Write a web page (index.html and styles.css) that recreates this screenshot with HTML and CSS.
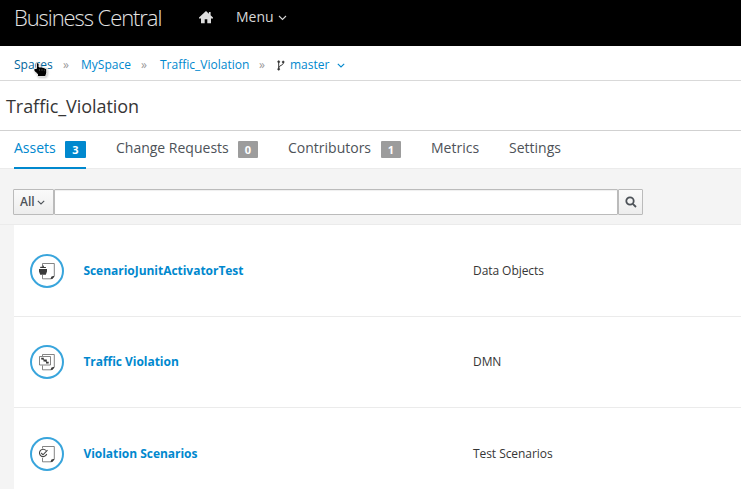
FILE: index.html
```html
<!DOCTYPE html>
<html lang="en">
<head>
<meta charset="utf-8">
<title>Business Central</title>
<link rel="stylesheet" href="styles.css">
</head>
<body>
<header class="masthead">
  <span class="brand">Business Central</span>
  <svg class="home" width="14" height="13" viewBox="0 0 14 13"><path d="M7 0 0 6.6V7.4H2V12.3H5.7V8.2H8.3V12.3H12V7.4H14V6.6L11.6 4.3V1H9.9V2.7Z"/></svg>
  <span class="menu">Menu</span>
  <svg class="chevron menu-chevron" width="9" height="6" viewBox="0 0 9 6"><path d="M1 1 4.5 4.5 8 1"/></svg>
</header>
<nav class="crumbs">
  <a class="crumb crumb-spaces">Spaces<svg class="pointer" width="15" height="16" viewBox="0 0 15 16"><path d="M3.5 1.5Q4.7 0 6 1.5V5H8.5L11 5.7 13.7 7V11L12.5 14.5H4.5V12L1 9V6.5H3.5Z"/><path class="knuckles" d="M6.5 7V9M9 7V9M11.4 7.6V9.2"/></svg></a>
  <span class="sep sep-1">»</span>
  <a class="crumb crumb-myspace">MySpace</a>
  <span class="sep sep-2">»</span>
  <a class="crumb crumb-project">Traffic_Violation</a>
  <span class="sep sep-3">»</span>
  <svg class="branch" width="8" height="11" viewBox="0 0 8 11"><path d="M1.7 2V9M6.2 2V3.5C6.2 5.3 2 5.3 1.8 7.8"/><circle cx="1.7" cy="1.7" r="1"/><circle cx="6.2" cy="2" r="1"/><circle cx="1.7" cy="9.2" r="1"/></svg>
  <a class="crumb crumb-branch">master</a>
  <svg class="chevron crumb-chevron" width="8" height="5" viewBox="0 0 8 5"><path d="M.8.8 4 4 7.2.8"/></svg>
</nav>
<div class="heading"><h1>Traffic_Violation</h1></div>
<nav class="tabs">
  <div class="tab tab-assets active"><span>Assets</span><b class="badge">3</b></div>
  <div class="tab tab-requests"><span>Change Requests</span><b class="badge">0</b></div>
  <div class="tab tab-contributors"><span>Contributors</span><b class="badge">1</b></div>
  <div class="tab tab-metrics"><span>Metrics</span></div>
  <div class="tab"><span>Settings</span></div>
</nav>
<div class="toolbar">
  <button class="filter">All<svg class="chevron" width="8" height="5" viewBox="0 0 8 5"><path d="M.8.8 4 4 7.2.8"/></svg></button>
  <input class="query" type="text" aria-label="Search assets">
  <button class="search" aria-label="Search"><svg width="12" height="12" viewBox="0 0 12 12"><circle cx="5" cy="5" r="3.7"/><path d="M7.8 7.8 11 11"/></svg></button>
</div>
<main class="assets">
  <div class="asset">
    <svg class="icon" width="34" height="34" viewBox="0 0 34 34"><circle class="ring" cx="17" cy="17" r="16"/><path class="page" d="M12.5 12V9.5H24.3V21.8L21.5 24.8H12.5V21"/><path class="solid" d="M9 15H17V17.5L15.8 20.8H10.2L9 17.5ZM10 14 10.5 12.8H12.2L12.6 11.5H13.6L14 13H15.8L16 14ZM20.5 24.8 21.5 22.5 24.3 21.7V22.8L22.3 25Z"/></svg>
    <a class="name">ScenarioJunitActivatorTest</a><span class="type">Data Objects</span>
  </div>
  <div class="asset">
    <svg class="icon" width="34" height="34" viewBox="0 0 34 34"><circle class="ring" cx="17" cy="17" r="16"/><path class="page" d="M12.5 11V9.5H24.3V21.8L21.5 24.8H12.5V20.5M9.5 11.5H20.5V20H9.5ZM12 13.5 18 18"/><path class="solid" d="M11.2 12.8H13.8V14.6H11.2ZM13.5 14.5H16.8V16.5H13.5ZM16 16.7H18.7V18.6H16ZM20.5 24.8 21.5 22.5 24.3 21.7V22.8L22.3 25Z"/></svg>
    <a class="name">Traffic Violation</a><span class="type">DMN</span>
  </div>
  <div class="asset">
    <svg class="icon" width="34" height="34" viewBox="0 0 34 34"><circle class="ring" cx="17" cy="17" r="16"/><path class="page" d="M12.5 11.5V9.5H24.3V21.8L21.5 24.8H12.5V21"/><path class="check" d="M16 13.5A3.7 3.7 0 1 0 16.7 17M11.2 16 13 17.8 17.5 13.2"/><path class="solid" d="M20.5 24.8 21.5 22.5 24.3 21.7V22.8L22.3 25Z"/></svg>
    <a class="name">Violation Scenarios</a><span class="type">Test Scenarios</span>
  </div>
</main>
</body>
</html>
```
FILE: styles.css
```css
* { box-sizing: border-box; }
body { margin: 0; height: 489px; overflow: hidden; background: #f4f4f4; font: 12px/20px "Open Sans", sans-serif; color: #363636; }
svg { flex: none; display: block; }
span, a { white-space: nowrap; }
.chevron { fill: none; stroke: currentColor; stroke-width: 1.1; }
.masthead { display: flex; align-items: flex-start; height: 46px; background: #000; color: #d6d6d6; padding-left: 15px; }
.brand { width: 185px; margin-left: -1px; font-size: 22px; font-weight: 300; line-height: 30px; padding-top: 2px; letter-spacing: -1.08px; color: #e4e4e4; }
.home { margin-top: 11px; fill: #ddd; }
.menu { width: 42px; margin-left: 23px; padding-top: 7px; font-size: 14px; }
.menu-chevron { margin-top: 15px; }
.crumbs { display: flex; align-items: center; height: 35px; padding: 4px 0 0 14px; background: #fff; border-bottom: 1px solid #d9d9d9; color: #0088ce; }
.crumb-spaces { position: relative; width: 49px; color: #00659c; }
.pointer { position: absolute; left: 19px; top: 7px; fill: #000; stroke: #fff; stroke-width: .8; filter: drop-shadow(1px 1px 1px #9999); }
.pointer .knuckles { stroke: #555; stroke-width: .6; }
.sep { width: 18px; color: #999; }
.crumb-myspace { width: 60px; }
.sep-2 { width: 19px; }
.crumb-project { width: 99px; }
.branch { margin-right: 5px; fill: #363636; stroke: #363636; stroke-width: .6; }
.branch path { fill: none; stroke-width: 1; }
.crumb-branch { width: 47px; }
.heading { height: 50px; padding: 13px 0 0 6px; background: #fff; border-bottom: 1px solid #d1d1d1; }
h1 { margin: 0; font-size: 18px; line-height: 25px; font-weight: 400; letter-spacing: -.05px; }
.tabs { display: flex; height: 38px; padding-left: 14px; background: #fff; border-bottom: 1px solid #ebebeb; color: #4d5258; font-size: 14px; }
.tab { display: flex; justify-content: space-between; height: 38px; padding-top: 7px; }
.tab-assets { width: 72px; margin-right: 30px; }
.tab-requests { width: 142px; margin-right: 30px; }
.tab-contributors { width: 113px; margin-right: 30px; }
.tab-metrics { width: 48px; margin-right: 30px; }
.active { color: #0088ce; border-bottom: 2px solid #0088ce; }
.badge { width: 20px; height: 17px; margin-top: 3px; background: #9c9c9c; color: #fff; font-size: 11px; line-height: 18px; text-align: center; border-radius: 1px; }
.active .badge { width: 21px; background: #0088ce; }
.toolbar { display: flex; height: 56px; padding: 20px 0 0 13px; border-bottom: 1px solid #ebebeb; }
button { height: 26px; border: 1px solid #bbb; border-radius: 1px; background: linear-gradient(#fafafa, #ededed); color: #4d5258; font: 600 12px/20px "Open Sans", sans-serif; padding: 0 6px; }
.filter { display: flex; align-items: center; gap: 2px; width: 41px; }
.query { width: 564px; height: 26px; margin: 0; border: 1px solid #bbb; border-radius: 1px; padding: 0 6px; background: #fff; box-shadow: inset 0 1px 1px #0001; }
.search { display: flex; align-items: center; justify-content: center; width: 25px; }
.search svg { fill: none; stroke: #4d5258; stroke-width: 1.8; }
.assets { margin-left: 14px; background: #fff; }
.asset { display: flex; align-items: center; height: 91px; padding-left: 16px; border-bottom: 1px solid #ebebeb; }
.asset:first-child, .asset:last-child { height: 92px; }
.icon { margin-right: 19.4px; }
.ring { fill: #fff; stroke: #39a5dc; stroke-width: 2; }
.page, .check { fill: none; stroke: #666; stroke-width: .8; }
.check { stroke: #444; stroke-width: 1.1; }
.solid { fill: #3a3a3a; }
.name { width: 389.6px; font-weight: 700; letter-spacing: -.03px; color: #0088ce; }
.type { letter-spacing: -.06px; }
```
